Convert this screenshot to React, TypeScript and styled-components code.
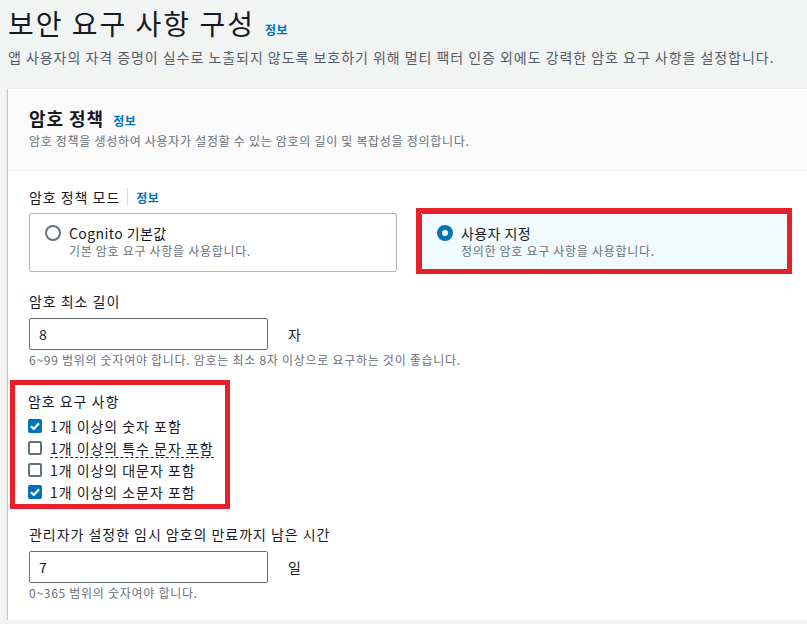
import React from "react";
import styled, { createGlobalStyle } from "styled-components";

const Global = createGlobalStyle`
  html, body { margin: 0; padding: 0; background: #f2f3f3; overflow: hidden; }
  body {
    font-family: "Noto Sans CJK KR", "Noto Sans", sans-serif;
    color: #16191f;
    letter-spacing: 0.06em;
  }
  * { box-sizing: border-box; }
`;

const Page = styled.div`
  padding: 5px 0 0 8px;
  width: 840px;
`;

const TitleRow = styled.div`
  display: flex;
  align-items: baseline;
  gap: 10px;
`;

const Title = styled.h1`
  margin: 0;
  font-size: 28px;
  line-height: 36px;
  font-weight: 400;
  color: #16191f;
  letter-spacing: 2px;
`;

const InfoLink = styled.a`
  font-size: 12px;
  font-weight: 700;
  color: #0073bb;
  text-decoration: none;
  letter-spacing: 0.5px;
`;

const PageDesc = styled.p`
  margin: 6px 0 0;
  font-size: 14px;
  line-height: 20px;
  color: #545b64;
`;

const Container = styled.section`
  margin-top: 21px;
  background: #fff;
  border-top: 1px solid #eaeded;
  box-shadow: 0 1px 1px 0 rgba(0, 28, 36, 0.3), 1px 1px 1px 0 rgba(0, 28, 36, 0.15),
    -1px 1px 1px 0 rgba(0, 28, 36, 0.15);
  width: 860px;
`;

const Header = styled.header`
  background: #fafafa;
  border-bottom: 1px solid #eaeded;
  padding: 17px 20px 20px 21px;
`;

const HeaderTitleRow = styled.div`
  display: flex;
  align-items: baseline;
  gap: 9px;
`;

const HeaderTitle = styled.h2`
  margin: 0;
  font-size: 18px;
  line-height: 24px;
  font-weight: 700;
`;

const HeaderDesc = styled.p`
  margin: 2px 0 0;
  font-size: 12px;
  line-height: 18px;
  color: #687078;
  letter-spacing: 0.7px;
`;

const Body = styled.div`
  padding: 16px 20px 19px 21px;
  display: flex;
  flex-direction: column;
`;

const LabelRow = styled.div`
  display: flex;
  align-items: center;
  height: 20px;
`;

const Label = styled.span`
  font-size: 14px;
  line-height: 20px;
  color: #16191f;
`;

const Divider = styled.span`
  width: 1px;
  height: 18px;
  background: #d5dbdb;
  margin: 0 8px 0 7px;
`;

const Tiles = styled.div`
  margin-top: 6px;
  display: grid;
  grid-template-columns: 368px 368px;
  gap: 24px;
`;

const Annotated = styled.div`
  position: relative;
  &::after {
    content: "";
    position: absolute;
    top: -5px;
    left: -5px;
    right: -3px;
    bottom: -2px;
    border: 5px solid #e8202a;
    pointer-events: none;
  }
`;

const Tile = styled.label<{ $selected?: boolean }>`
  display: flex;
  gap: 8px;
  height: 59px;
  padding: 9px 15px 0;
  border: 1px solid ${(p) => (p.$selected ? "#0073bb" : "#aab7b8")};
  background: ${(p) => (p.$selected ? "#f1faff" : "#fff")};
  border-radius: 2px;
`;

const Radio = styled.span<{ $checked?: boolean }>`
  flex: none;
  width: 16px;
  height: 16px;
  margin-top: 2px;
  border-radius: 50%;
  border: ${(p) => (p.$checked ? "5px solid #0073bb" : "2px solid #687078")};
  background: #fff;
`;

const TileText = styled.div`
  display: flex;
  flex-direction: column;
`;

const TileTitle = styled.span`
  font-size: 14px;
  line-height: 20px;
  letter-spacing: 0.03em;
`;

const TileDesc = styled.span`
  font-size: 12px;
  line-height: 16px;
  color: #687078;
  letter-spacing: 0.7px;
`;

const Field = styled.div<{ $top: number }>`
  margin-top: ${(p) => p.$top}px;
  display: flex;
  flex-direction: column;
`;

const InputRow = styled.div`
  margin-top: 7px;
  display: flex;
  align-items: center;
  gap: 20px;
`;

const Input = styled.input`
  width: 239px;
  height: 32px;
  border: 1px solid #687078;
  border-radius: 2px;
  padding: 0 9px;
  font-family: inherit;
  font-size: 14px;
  color: #16191f;
  background: #fff;
  outline: none;
`;

const Unit = styled.span`
  font-size: 14px;
  color: #16191f;
`;

const Hint = styled.span`
  margin-top: 2px;
  font-size: 12px;
  line-height: 16px;
  color: #687078;
  letter-spacing: 0.72px;
`;

const ReqGroup = styled.div`
  margin: 17px 0 0 -14px;
  width: 210px;
  padding: 6px 0 1px 13px;
  outline: 5px solid #e8202a;
  display: flex;
  flex-direction: column;
`;

const CheckList = styled.div`
  margin-top: 4px;
  display: flex;
  flex-direction: column;
`;

const CheckRow = styled.label`
  display: flex;
  align-items: center;
  gap: 8px;
  height: 22px;
`;

const Box = styled.span<{ $checked?: boolean }>`
  flex: none;
  width: 14px;
  height: 14px;
  border-radius: 2px;
  border: ${(p) => (p.$checked ? "none" : "2px solid #687078")};
  background: ${(p) => (p.$checked ? "#0073bb" : "#fff")};
  display: flex;
  align-items: center;
  justify-content: center;
`;

const CheckText = styled.span<{ $dashed?: boolean }>`
  font-size: 14px;
  line-height: 18px;
  color: #16191f;
  border-bottom: ${(p) => (p.$dashed ? "1px dashed #16191f" : "1px solid transparent")};
`;

const Check = () => (
  <svg width="10" height="8" viewBox="0 0 10 8">
    <path d="M1 4.2 L3.8 7 L9 1.2" fill="none" stroke="#fff" strokeWidth="2.2" />
  </svg>
);

const reqs = [
  { text: "1개 이상의 숫자 포함", checked: true },
  { text: "1개 이상의 특수 문자 포함", checked: false, dashed: true },
  { text: "1개 이상의 대문자 포함", checked: false },
  { text: "1개 이상의 소문자 포함", checked: true },
];

export default function App() {
  return (
    <>
      <Global />
      <Page>
        <TitleRow>
          <Title>보안 요구 사항 구성</Title>
          <InfoLink>정보</InfoLink>
        </TitleRow>
        <PageDesc>
          앱 사용자의 자격 증명이 실수로 노출되지 않도록 보호하기 위해 멀티 팩터 인증 외에도 강력한 암호 요구 사항을 설정합니다.
        </PageDesc>
        <Container>
          <Header>
            <HeaderTitleRow>
              <HeaderTitle>암호 정책</HeaderTitle>
              <InfoLink>정보</InfoLink>
            </HeaderTitleRow>
            <HeaderDesc>암호 정책을 생성하여 사용자가 설정할 수 있는 암호의 길이 및 복잡성을 정의합니다.</HeaderDesc>
          </Header>
          <Body>
            <LabelRow>
              <Label>암호 정책 모드</Label>
              <Divider />
              <InfoLink>정보</InfoLink>
            </LabelRow>
            <Tiles>
              <Tile>
                <Radio />
                <TileText>
                  <TileTitle>Cognito 기본값</TileTitle>
                  <TileDesc>기본 암호 요구 사항을 사용합니다.</TileDesc>
                </TileText>
              </Tile>
              <Annotated>
                <Tile $selected>
                  <Radio $checked />
                  <TileText>
                    <TileTitle>사용자 지정</TileTitle>
                    <TileDesc>정의한 암호 요구 사항을 사용합니다.</TileDesc>
                  </TileText>
                </Tile>
              </Annotated>
            </Tiles>
            <Field $top={19}>
              <Label>암호 최소 길이</Label>
              <InputRow>
                <Input defaultValue="8" />
                <Unit>자</Unit>
              </InputRow>
              <Hint>6~99 범위의 숫자여야 합니다. 암호는 최소 8자 이상으로 요구하는 것이 좋습니다.</Hint>
            </Field>
            <ReqGroup>
              <Label>암호 요구 사항</Label>
              <CheckList>
                {reqs.map((r) => (
                  <CheckRow key={r.text}>
                    <Box $checked={r.checked}>{r.checked && <Check />}</Box>
                    <CheckText $dashed={r.dashed}>{r.text}</CheckText>
                  </CheckRow>
                ))}
              </CheckList>
            </ReqGroup>
            <Field $top={20}>
              <Label>관리자가 설정한 임시 암호의 만료까지 남은 시간</Label>
              <InputRow>
                <Input defaultValue="7" />
                <Unit>일</Unit>
              </InputRow>
              <Hint>0~365 범위의 숫자여야 합니다.</Hint>
            </Field>
          </Body>
        </Container>
      </Page>
    </>
  );
}
